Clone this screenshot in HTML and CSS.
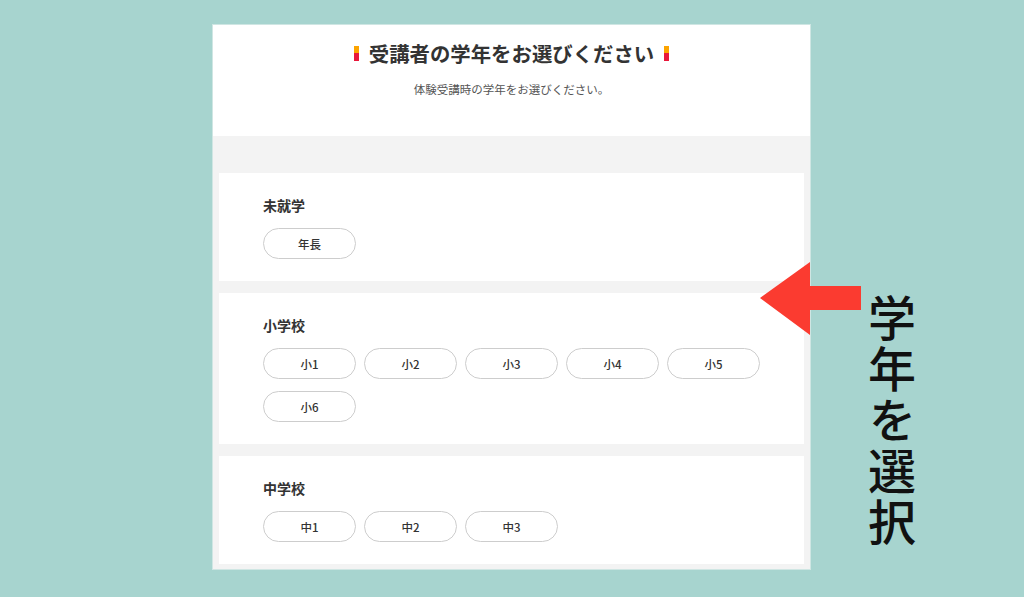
FILE: index.html
```html
<!DOCTYPE html>
<html lang="ja">
<head>
<meta charset="utf-8">
<title>学年を選択</title>
<link rel="stylesheet" href="styles.css">
</head>
<body>
<div class="stage">
  <div class="panel">
    <div class="header">
      <h1 class="title"><span class="mark"></span>受講者の学年をお選びください<span class="mark"></span></h1>
      <p class="sub">体験受講時の学年をお選びください。</p>
    </div>
    <div class="body">
      <section class="card">
        <h2 class="label">未就学</h2>
        <div class="btns">
          <button class="btn">年長</button>
        </div>
      </section>
      <section class="card">
        <h2 class="label">小学校</h2>
        <div class="btns">
          <button class="btn">小1</button>
          <button class="btn">小2</button>
          <button class="btn">小3</button>
          <button class="btn">小4</button>
          <button class="btn">小5</button>
          <button class="btn">小6</button>
        </div>
      </section>
      <section class="card">
        <h2 class="label">中学校</h2>
        <div class="btns">
          <button class="btn">中1</button>
          <button class="btn">中2</button>
          <button class="btn">中3</button>
        </div>
      </section>
    </div>
  </div>
</div>
<svg class="arrow" width="102" height="74" viewBox="0 0 102 74"><polygon points="0,36 50,0 50,24 101,24 101,48 50,48 50,73" fill="#fb3b30"/></svg>
<div class="note">学年を選択</div>
</body>
</html>
```
FILE: styles.css
```css
html, body {
  margin: 0;
  padding: 0;
}
body {
  width: 1024px;
  height: 597px;
  overflow: hidden;
  background: #a7d4cf;
  font-family: "Noto Sans CJK JP", "Noto Sans", sans-serif;
  color: #333;
  position: relative;
}
.stage {
  display: flex;
  padding: 25px 0 0 213px;
}
.panel {
  width: 597px;
  background: #f3f3f3;
  box-shadow: 0 0 0 1px #cfe6e3;
}
.header {
  background: #fff;
  padding: 14px 0 38px;
  text-align: center;
}
.title {
  margin: 0;
  font-size: 20.4px;
  line-height: 28px;
  font-weight: 700;
  color: #333;
  display: flex;
  justify-content: center;
  align-items: center;
  gap: 10px;
}
.mark {
  display: inline-block;
  width: 5px;
  height: 15px;
  background: linear-gradient(#fca400 0 50%, #e8173a 50% 100%);
}
.sub {
  margin: 13px 0 0;
  font-size: 11.5px;
  line-height: 18px;
  color: #555;
}
.body {
  padding: 37px 6px 5px;
  display: flex;
  flex-direction: column;
  gap: 12px;
}
.card {
  background: #fff;
  padding: 22px 44px 22px;
}
.label {
  margin: 0 0 13px;
  font-size: 14px;
  line-height: 20px;
  font-weight: 700;
  color: #333;
}
.btns {
  display: flex;
  flex-wrap: wrap;
  gap: 12px 8px;
}
.btn {
  width: 93px;
  height: 31px;
  box-sizing: border-box;
  border: 1.5px solid #cdcdcd;
  border-radius: 16px;
  background: #fff;
  font-family: "Noto Sans CJK JP", "Noto Sans", sans-serif;
  font-size: 11.5px;
  font-weight: 500;
  color: #333;
  padding: 0;
}
.arrow {
  position: absolute;
  left: 760px;
  top: 262px;
}
.note {
  position: absolute;
  left: 868px;
  top: 294px;
  writing-mode: vertical-rl;
  font-size: 48px;
  line-height: 1;
  letter-spacing: 3px;
  font-weight: 500;
  color: #111;
}
```
